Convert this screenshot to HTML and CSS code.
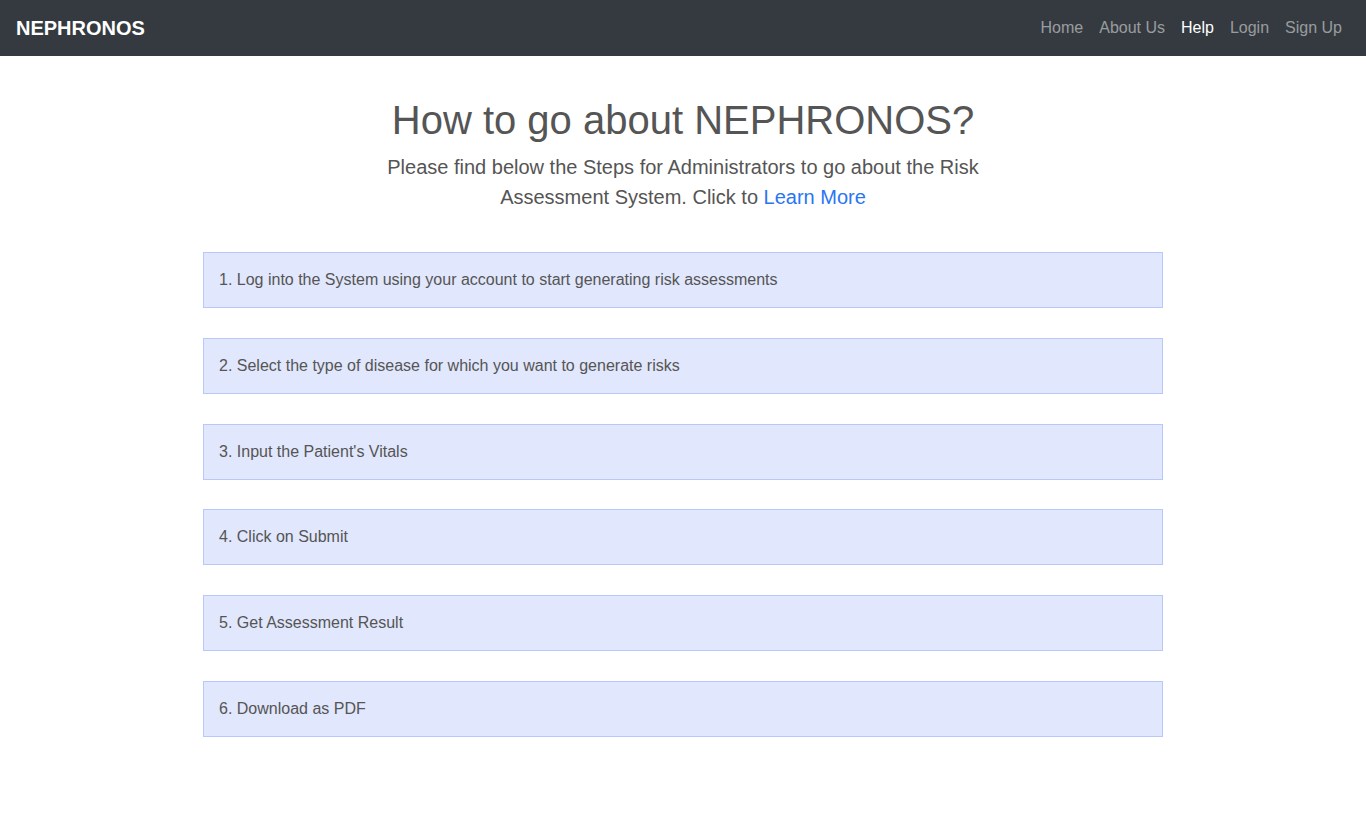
FILE: index.html
```html
<!DOCTYPE html>
<html lang="en">
<head>
<meta charset="utf-8">
<title>NEPHRONOS - Help</title>
<link rel="stylesheet" href="styles.css">
</head>
<body>
<nav class="navbar">
  <a class="brand" href="#">NEPHRONOS</a>
  <ul class="nav">
    <li><a class="nav-link" href="#">Home</a></li>
    <li><a class="nav-link" href="#">About Us</a></li>
    <li><a class="nav-link active" href="#">Help</a></li>
    <li><a class="nav-link" href="#">Login</a></li>
    <li><a class="nav-link" href="#">Sign Up</a></li>
  </ul>
</nav>
<main class="main">
  <header class="intro">
    <h1 class="title">How to go about NEPHRONOS?</h1>
    <p class="lead">Please find below the Steps for Administrators to go about the Risk Assessment System. Click to <a class="link" href="#">Learn More</a></p>
  </header>
  <section class="steps">
    <div class="step">1. Log into the System using your account to start generating risk assessments</div>
    <div class="step">2. Select the type of disease for which you want to generate risks</div>
    <div class="step">3. Input the Patient's Vitals</div>
    <div class="step">4. Click on Submit</div>
    <div class="step">5. Get Assessment Result</div>
    <div class="step">6. Download as PDF</div>
  </section>
</main>
</body>
</html>
```
FILE: styles.css
```css
* { box-sizing: border-box; }
html, body { margin: 0; padding: 0; }
body {
  font-family: "Liberation Sans", Arial, sans-serif;
  font-size: 16px;
  line-height: 1.5;
  color: #555;
  background: #fff;
}
a { text-decoration: none; }
.navbar {
  height: 56px;
  background: #343a40;
  display: flex;
  align-items: center;
  justify-content: space-between;
  padding: 0 16px;
}
.brand {
  color: #fff;
  font-size: 20px;
  font-weight: bold;
  line-height: 30px;
}
.nav {
  list-style: none;
  margin: 0;
  padding: 0;
  display: flex;
}
.nav-link {
  display: block;
  padding: 8px 8px;
  color: rgba(255,255,255,0.5);
  font-size: 16px;
  line-height: 24px;
}
.nav-link:last-child { }
.nav li:last-child .nav-link { padding-right: 8px; }
.nav-link.active { color: #fff; }
.main {
  padding-top: 40px;
}
.intro {
  text-align: center;
  max-width: 610px;
  margin: 0 auto;
}
.title {
  margin: 0 0 8px;
  font-size: 40px;
  font-weight: 400;
  line-height: 48px;
  color: #555;
}
.lead {
  margin: 0;
  font-size: 20px;
  line-height: 30px;
  color: #555;
}
.link { color: #2a75f3; }
.steps {
  width: 960px;
  margin: 40px auto 0;
  display: flex;
  flex-direction: column;
  gap: 29.8px;
}
.step {
  background: #e1e7fc;
  border: 1px solid #b9c8fb;
  padding: 15px 15px;
  font-size: 16px;
  line-height: 24px;
  color: #555;
}
```
